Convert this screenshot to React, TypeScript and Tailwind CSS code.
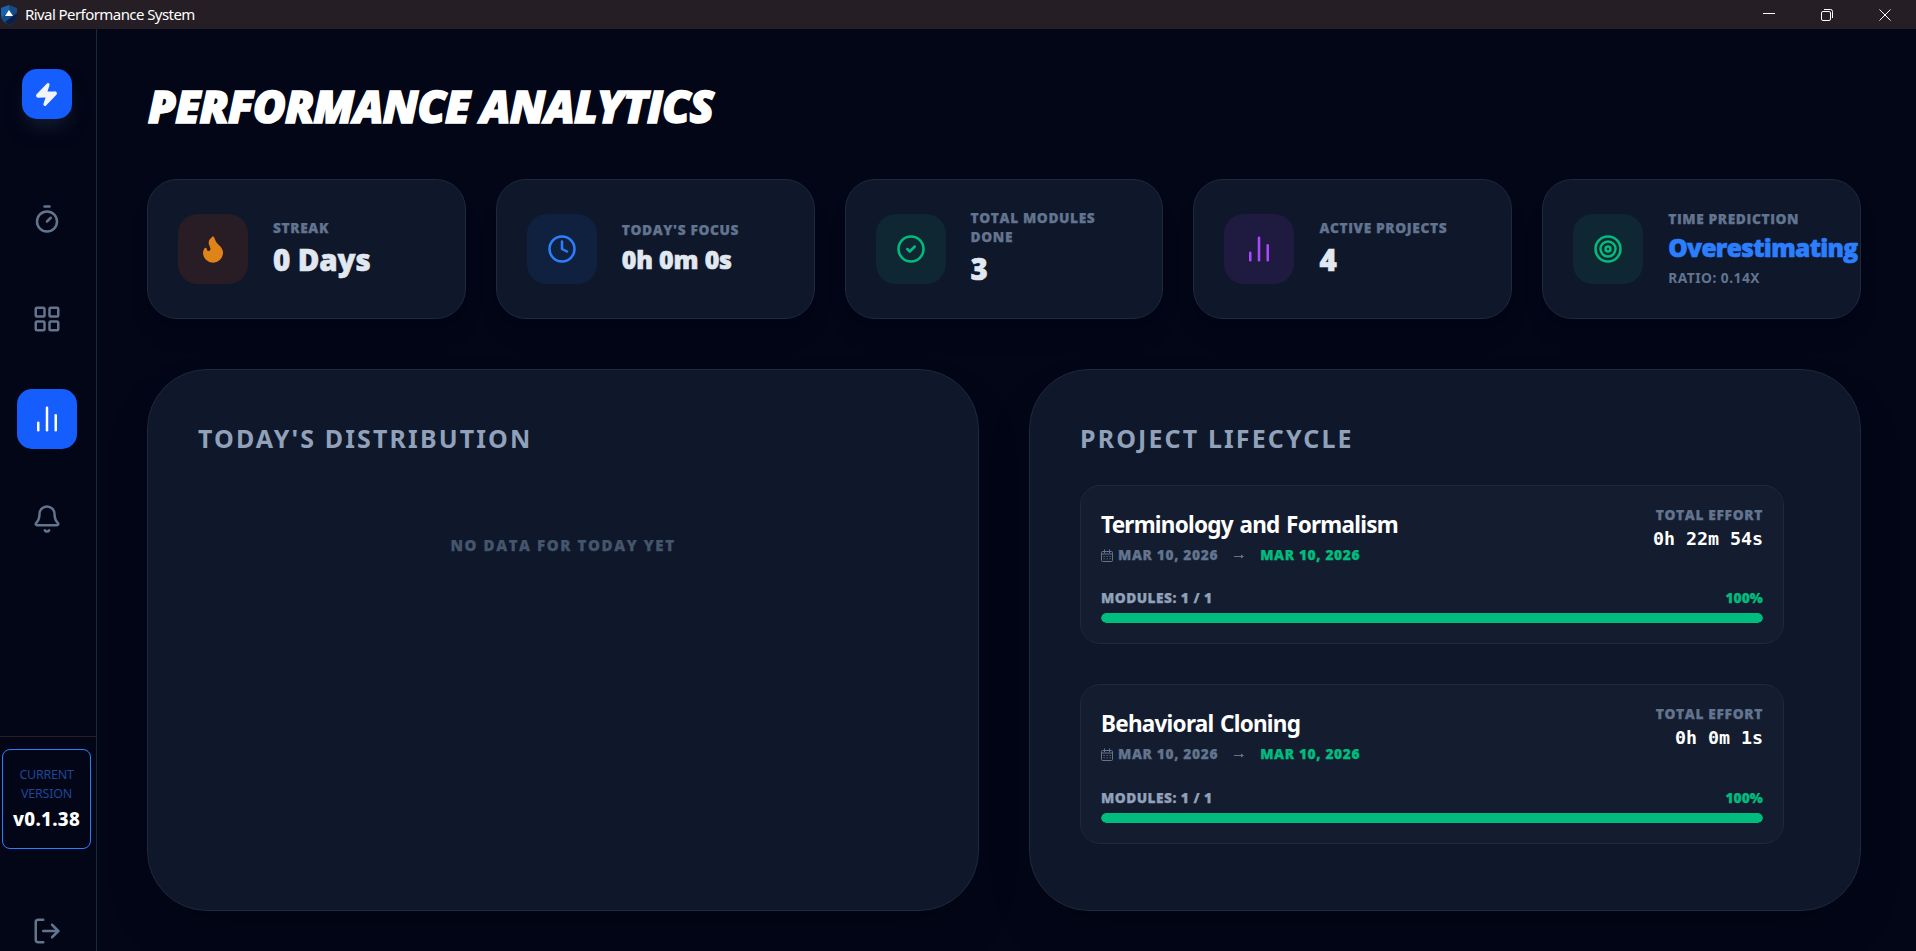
import React from 'react';
import {
  Bell,
  ChartNoAxesColumn,
  CircleCheck,
  Clock,
  Flame,
  LayoutGrid,
  LogOut,
  Target,
  Timer,
  Zap,
} from 'lucide-react';
import clsx from 'clsx';

interface StatCardProps {
  icon: React.ReactNode;
  tile: string;
  label: string;
  value: string;
  valueClass: string;
  note?: string;
}

interface Project {
  name: string;
  start: string;
  end: string;
  effort: string;
  done: number;
  total: number;
}

const projects: Project[] = [
  { name: 'Terminology and Formalism', start: 'Mar 10, 2026', end: 'Mar 10, 2026', effort: '0h 22m 54s', done: 1, total: 1 },
  { name: 'Behavioral Cloning', start: 'Mar 10, 2026', end: 'Mar 10, 2026', effort: '0h 0m 1s', done: 1, total: 1 },
];

// Heavy face used for labels and figures
const heavy = "font-['Open_Sans',sans-serif] font-extrabold [-webkit-text-stroke:0.25px_currentColor]";

const TitleBar = () => (
  <header className="flex h-[29px] shrink-0 items-center justify-between bg-[#251e24]">
    <div className="flex items-center">
      <svg width="18" height="22" viewBox="0 0 18 22">
        <path d="M9 1 L17 4 V13 Q16 18 9 21 Q2 18 1 13 V4 Z" fill="#164a86" />
        <path d="M9 1 L1 4 V13 L9 8 Z" fill="#1c62ab" />
        <path d="M17 9 V13 Q16 18 9 21 L5 18 Z" fill="#0b1f4a" />
        <path d="M9 6 L13 12 H5 Z" fill="#ffffff" />
      </svg>
      <span className="ml-[7px] text-[15px] tracking-[-0.57px] text-white">Rival Performance System</span>
    </div>
    <div className="flex items-center gap-[46px] pr-[25px]">
      <svg width="12" height="12" viewBox="0 0 12 12" stroke="#fff" fill="none">
        <path d="M0 4.5H12" />
      </svg>
      <svg width="12" height="12" viewBox="0 0 12 12" stroke="#fff" fill="none">
        <rect x="0.5" y="2.5" width="9" height="9" rx="1.5" />
        <path d="M3 0.5H9.5Q11.5 0.5 11.5 2.5V9" />
      </svg>
      <svg width="12" height="12" viewBox="0 0 12 12" stroke="#fff" fill="none">
        <path d="M0.5 0.5L11.5 11.5M11.5 0.5L0.5 11.5" />
      </svg>
    </div>
  </header>
);

const NavItem = ({ active, children }: { active?: boolean; children: React.ReactNode }) => (
  <button
    className={clsx(
      'flex size-[60px] items-center justify-center rounded-[15px]',
      active ? 'bg-blue-600 text-white' : 'text-slate-500'
    )}
  >
    {children}
  </button>
);

const Sidebar = () => (
  <aside className="flex w-[97px] shrink-0 flex-col border-r border-slate-800 pt-10">
    <div className="ml-[22px] flex size-[50px] items-center justify-center rounded-[15px] bg-blue-600 pr-px shadow-[0_12px_18px_-4px_#1d293d99]">
      <Zap size={25} className="text-slate-100" fill="currentColor" />
    </div>
    <nav className="ml-[17px] mt-[70px] flex flex-col gap-10">
      <NavItem><Timer size={30} /></NavItem>
      <NavItem><LayoutGrid size={30} /></NavItem>
      <NavItem active><ChartNoAxesColumn size={30} /></NavItem>
      <NavItem><Bell size={30} /></NavItem>
    </nav>
    <div className="mt-auto h-[215px] border-t border-[#2a1d28] pl-[2px] pt-3">
      <div className="flex h-[100px] w-[89px] flex-col items-center rounded-[8px] border border-blue-500 pt-[15px]">
        <p className="text-center text-[12.5px] leading-[19px] tracking-[-0.25px] text-[#1f4796]">CURRENT<br />VERSION</p>
        <p className="mt-[3px] text-[18.75px] font-extrabold leading-[25px] tracking-[0.3px] text-white">v0.1.38</p>
      </div>
      <LogOut size={30} className="ml-[30px] mt-[67px] text-slate-500" />
    </div>
  </aside>
);

const StatCard = ({ icon, tile, label, value, valueClass, note }: StatCardProps) => (
  <div className="flex h-[140px] min-w-0 items-center gap-[25px] rounded-[30px] border border-slate-800 bg-slate-900 px-[30px] shadow-xl">
    <div className={clsx('flex size-[70px] shrink-0 items-center justify-center rounded-[20px]', tile)}>{icon}</div>
    <div className="min-w-0 pb-[2px]">
      <p className={clsx('text-[13.75px] uppercase leading-[19px] tracking-[0.6px] text-slate-500', heavy)}>{label}</p>
      <p className={clsx("whitespace-nowrap font-['Open_Sans',sans-serif] font-extrabold [-webkit-text-stroke:0.6px_currentColor]", valueClass)}>{value}</p>
      {note && <p className="mt-[3px] text-[13.75px] font-bold uppercase leading-[19px] tracking-[0.5px] text-slate-500">{note}</p>}
    </div>
  </div>
);

const CalendarIcon = () => (
  <svg width="12" height="13" viewBox="0 0 12 13" fill="none" stroke="currentColor">
    <rect x="0.5" y="2.5" width="11" height="10" rx="1" />
    <path d="M0.5 5H11.5M3.5 0.5V4M8.5 0.5V4" />
    <path d="M2.5 7.5H10M2.5 9.8H10" strokeDasharray="1.2 1.8" />
  </svg>
);

const ProjectCard = ({ project }: { project: Project }) => {
  const percent = Math.round((project.done / project.total) * 100);
  return (
    <div className="flex h-[159.4px] flex-col rounded-[20px] border border-slate-800 bg-[#141c2f] px-5 pt-[19px]">
      <div className="flex justify-between">
        <div>
          <h3 className="mt-[4px] text-[22.5px] font-bold leading-[31px] tracking-[-0.75px] text-white [word-spacing:1.5px]">{project.name}</h3>
          <div className={clsx('mt-[5px] flex h-[20px] items-center text-[13.75px] uppercase tracking-[0.65px] text-slate-500', heavy)}>
            <CalendarIcon />
            <span className="ml-[5px]">{project.start}</span>
            <svg className="ml-[16px] mt-[2px]" width="10" height="5" viewBox="0 0 10 5" fill="currentColor">
              <path d="M0 2H7V0.5L10 2.5L7 4.5V3H0Z" />
            </svg>
            <span className="ml-[16px] text-emerald-500">{project.end}</span>
          </div>
        </div>
        <div className="text-right">
          <p className={clsx('text-[13.75px] uppercase leading-[19px] tracking-[0.65px] text-slate-500', heavy)}>Total Effort</p>
          <p className="mt-px font-['DejaVu_Sans_Mono',monospace] text-[18.3px] font-bold leading-[28px] text-white">{project.effort}</p>
        </div>
      </div>
      <div className={clsx('mt-auto flex justify-between text-[13.75px] uppercase leading-[19px]', heavy)}>
        <span className="tracking-[0.45px] text-slate-400">Modules: {project.done} / {project.total}</span>
        <span className="tracking-[0.1px] text-emerald-500">{percent}%</span>
      </div>
      <div className="mb-5 mt-[6px] h-[10px] shrink-0 overflow-hidden rounded-full bg-slate-950">
        <div className="h-full rounded-full bg-emerald-500" style={{ width: `${percent}%` }} />
      </div>
    </div>
  );
};

const App = () => {
  return (
    <div className="flex h-screen flex-col overflow-hidden bg-[#020617] font-['Noto_Sans','Open_Sans',sans-serif]">
      <TitleBar />
      <div className="flex min-h-0 flex-1">
        <Sidebar />
        <main className="flex-1 pl-[50px] pr-[55px] pt-[50px]">
          <h1 className="h-[100px] whitespace-nowrap pl-px font-['Open_Sans',sans-serif] text-[45px] font-extrabold italic leading-[53px] tracking-[-0.88px] text-white [-webkit-text-stroke:1.5px_currentColor]">PERFORMANCE ANALYTICS</h1>

          <section className="grid grid-cols-5 gap-[30px]">
            <StatCard
              icon={<Flame size={30} className="text-[#df8418]" fill="currentColor" />}
              tile="bg-[#291d25]"
              label="Streak"
              value="0 Days"
              valueClass="mt-[4px] text-[29.5px] leading-[38px] tracking-[-0.1px] text-slate-200"
            />
            <StatCard
              icon={<Clock size={30} className="text-blue-500" />}
              tile="bg-[#10203f]"
              label="Today's Focus"
              value="0h 0m 0s"
              valueClass="mt-[4px] text-[25px] leading-[33px] tracking-[-0.2px] text-slate-200"
            />
            <StatCard
              icon={<CircleCheck size={30} className="text-emerald-500" />}
              tile="bg-[#0e2732]"
              label="Total Modules Done"
              value="3"
              valueClass="mt-[4px] text-[29.5px] leading-[38px] text-slate-200"
            />
            <StatCard
              icon={<ChartNoAxesColumn size={30} className="text-purple-500" />}
              tile="bg-[#1f1b40]"
              label="Active Projects"
              value="4"
              valueClass="mt-[4px] text-[29.5px] leading-[38px] text-slate-200"
            />
            <StatCard
              icon={<Target size={30} className="text-emerald-500" />}
              tile="bg-[#0e2732]"
              label="Time Prediction"
              value="Overestimating"
              valueClass="mt-[3px] text-[24.5px] leading-[34px] tracking-[-0.65px] text-blue-500"
              note="Ratio: 0.14x"
            />
          </section>

          <section className="mt-[50px] grid grid-cols-2 gap-[50px]">
            <div className="h-[542px] rounded-[60px] border border-slate-800 bg-slate-900 px-[50px] pt-[51px] shadow-2xl">
              <h2 className="text-[25px] font-bold uppercase leading-[35px] tracking-[2.12px] text-slate-400">Today's Distribution</h2>
              <p className={clsx('mt-[79px] text-center text-[15px] uppercase leading-[20px] tracking-[1.6px] text-slate-600', heavy)}>No data for today yet</p>
            </div>
            <div className="h-[542px] rounded-[60px] border border-slate-800 bg-slate-900 px-[50px] pt-[51px] shadow-2xl">
              <h2 className="text-[25px] font-bold uppercase leading-[35px] tracking-[2.12px] text-slate-400">Project Lifecycle</h2>
              <div className="mr-[26px] mt-[29px] flex flex-col gap-10">
                {projects.map((project) => (
                  <ProjectCard key={project.name} project={project} />
                ))}
              </div>
            </div>
          </section>
        </main>
      </div>
    </div>
  );
};

export default App;
